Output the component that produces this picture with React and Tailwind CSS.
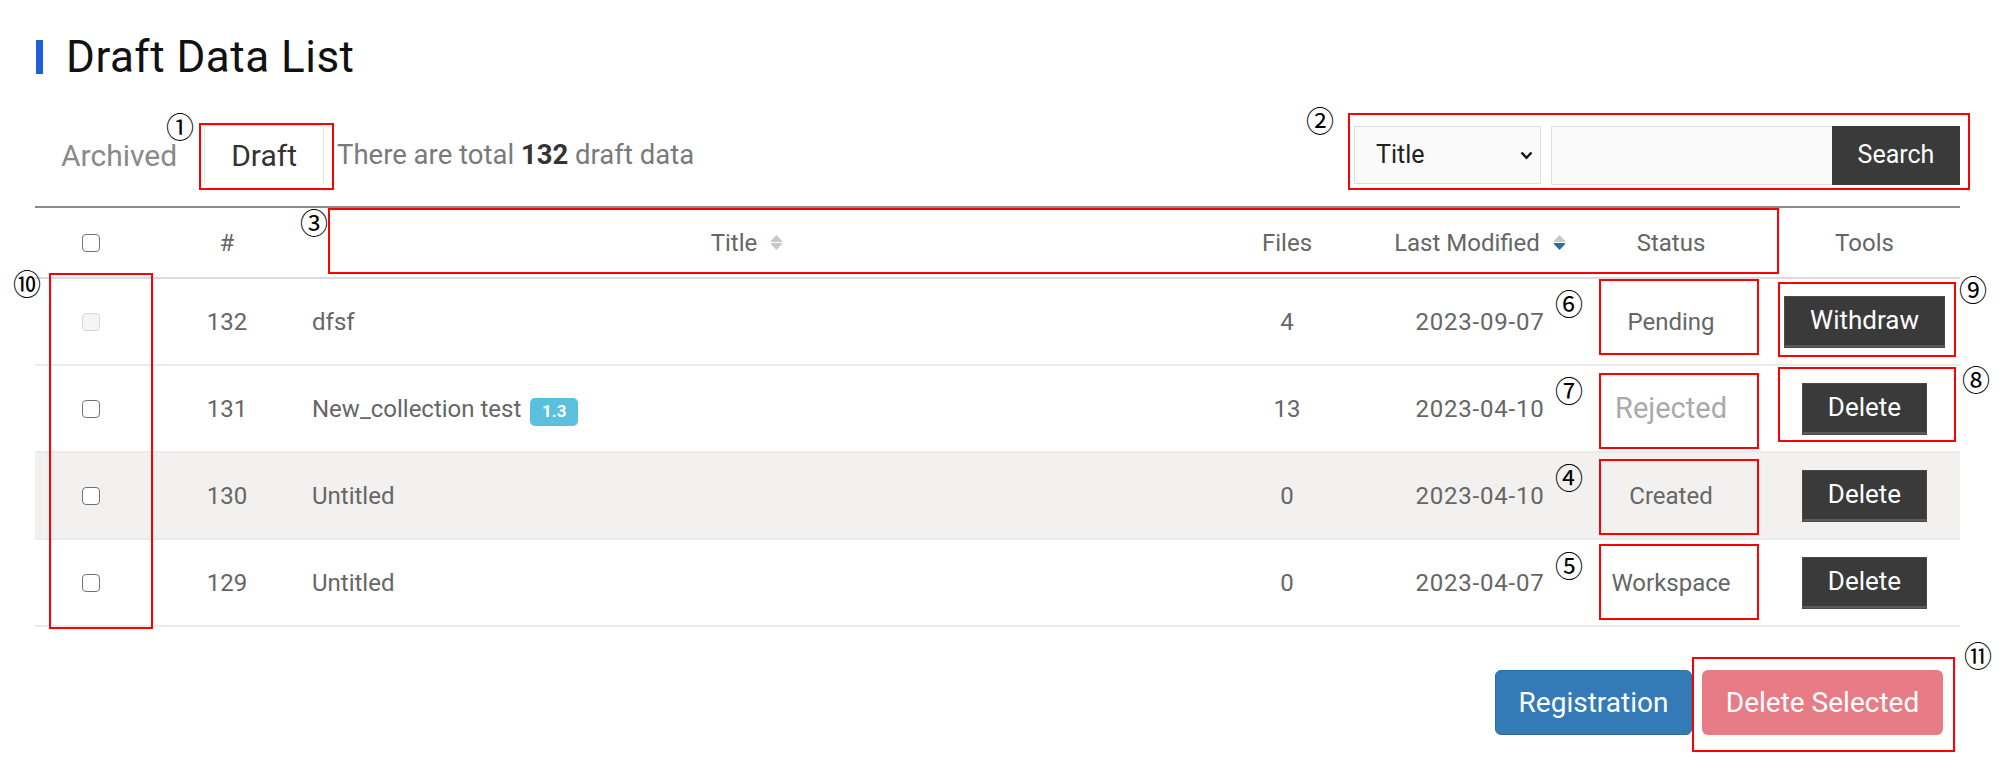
import React from "react";

const SortIcon = ({ active }) => (
  <svg width="13" height="15" viewBox="0 0 13 15">
    <path d="M1.5 6.2 L6.5 1 L11.5 6.2 Z" fill="#c8c8c8" stroke="#c8c8c8" strokeWidth="1.4" strokeLinejoin="round" />
    <path d="M1.5 8.8 L11.5 8.8 L6.5 14 Z" fill={active ? "#2c6aa8" : "#c8c8c8"} stroke={active ? "#2c6aa8" : "#c8c8c8"} strokeWidth="1.4" strokeLinejoin="round" />
  </svg>
);

const Box = ({ disabled }) =>
  disabled ? (
    <div className="w-[18px] h-[18px] rounded-[4px] border-[1.5px] border-[#d6d6d6] bg-[#f5f5f5]" />
  ) : (
    <div className="w-[18px] h-[18px] rounded-[4px] border-[1.5px] border-[#737373] bg-white" />
  );

const rows = [
  { n: 132, title: "dfsf", files: 4, date: "2023-09-07", status: "Pending", tool: "Withdraw", disabled: true },
  { n: 131, title: "New_collection test", badge: "1.3", files: 13, date: "2023-04-10", status: "Rejected", tool: "Delete" },
  { n: 130, title: "Untitled", files: 0, date: "2023-04-10", status: "Created", tool: "Delete", shade: true },
  { n: 129, title: "Untitled", files: 0, date: "2023-04-07", status: "Workspace", tool: "Delete" },
];

const Circ = ({ children, className }) => (
  <div className={"absolute w-[30px] h-[30px] flex items-center justify-center text-[28px] leading-none text-black font-['Noto_Sans_CJK_KR',sans-serif] " + className}>
    {children}
  </div>
);

export default function App() {
  return (
    <div className="relative w-[2006px] h-[780px] bg-white font-['Roboto',sans-serif] overflow-hidden">
      <div className="pl-[35px] w-[1960px]">
        {/* Title */}
        <div className="pt-[36px] h-[78px] flex items-center">
          <div className="w-[7px] h-[34px] bg-[#1d5fd8] ml-[1px]" />
          <div className="ml-[23px] text-[44px] leading-none text-[#111] tracking-[0.5px]">Draft Data List</div>
        </div>

        {/* Tabs + search */}
        <div className="mt-[47px] h-[60px] flex items-center justify-between">
          <div className="flex items-end h-[60px] ml-[1px]">
            <div className="h-[60px] px-[25px] flex items-center text-[30px] text-[#8a8a8a]">Archived</div>
            <div className="ml-[2px] h-[60px] px-[26px] flex items-center text-[30px] text-[#333] border border-b-0 border-[#e3e3e3] rounded-t-[4px]">Draft</div>
            <div className="ml-[13px] h-[60px] flex items-center text-[27.5px] text-[#7a7a7a]">
              There are total&nbsp;<span className="font-bold text-[#333]">132</span>&nbsp;draft data
            </div>
          </div>
          <div className="flex items-center">
            <div className="w-[187px] h-[58px] bg-[#fafafa] border border-[#dedede] flex items-center justify-between pl-[21px] pr-[7px]">
              <span className="text-[25px] text-[#222]">Title</span>
              <svg width="13" height="9" viewBox="0 0 13 9">
                <polyline points="1.5,1.5 6.5,6.8 11.5,1.5" fill="none" stroke="#111" strokeWidth="2.4" />
              </svg>
            </div>
            <div className="ml-[10px] w-[281px] h-[59px] bg-[#fafafa] border border-[#dedede] border-r-0" />
            <div className="w-[128px] h-[59px] bg-[#3a3a3a] flex items-center justify-center text-[25px] text-white">Search</div>
          </div>
        </div>

        {/* Table */}
        <div className="mt-[21px] w-[1925px] border-t-2 border-[#8c8c8c]">
          <div className="grid grid-cols-[112px_160px_880px_200px_186px_196px_191px] h-[71px] border-b-2 border-[#dcdcdc] items-center text-[24px] text-[#666]">
            <div className="flex justify-center"><Box /></div>
            <div className="text-center">#</div>
            <div className="flex items-center justify-center gap-[13px]">Title <SortIcon /></div>
            <div className="text-center">Files</div>
            <div className="flex items-center justify-center gap-[13px]">Last Modified <SortIcon active /></div>
            <div className="text-center">Status</div>
            <div className="text-center">Tools</div>
          </div>
          {rows.map((r) => (
            <div
              key={r.n}
              className={
                "grid grid-cols-[112px_160px_880px_200px_186px_196px_191px] h-[87px] border-b-2 border-[#ebebeb] items-center text-[24px] text-[#666] " +
                (r.shade ? "bg-[#f2f1f0]" : "bg-white")
              }
            >
              <div className="flex justify-center"><Box disabled={r.disabled} /></div>
              <div className="text-center">{r.n}</div>
              <div className="pl-[5px] flex items-center">
                <span>{r.title}</span>
                {r.badge && (
                  <span className="ml-[9px] mt-[6px] w-[48px] h-[28px] rounded-[5px] bg-[#5bc0de] text-white text-[17px] font-bold flex items-center justify-center">
                    {r.badge}
                  </span>
                )}
              </div>
              <div className="text-center">{r.files}</div>
              <div className="text-center tracking-[0.8px]">{r.date}</div>
              <div className={r.status === "Rejected" ? "text-center text-[29px] text-[#aaa]" : "text-center"}>{r.status}</div>
              <div className="flex justify-center">
                <div className="h-[50px] px-[25px] bg-[#3a3a3a] border-b-2 border-[#5a5a5a] shadow-[0_0_0_1px_#4a4a4a] flex items-center text-[26px] text-white">
                  {r.tool}
                </div>
              </div>
            </div>
          ))}
        </div>

        {/* Bottom buttons */}
        <div className="mt-[43px] w-[1925px] flex justify-end pr-[17px] gap-[10px]">
          <div className="w-[197px] h-[65px] rounded-[6px] bg-[#337ab7] border border-[#2e6da4] flex items-center justify-center text-[28px] text-white">
            Registration
          </div>
          <div className="w-[241px] h-[65px] rounded-[6px] bg-[#e87c86] flex items-center justify-center text-[28px] text-white">
            Delete Selected
          </div>
        </div>
      </div>

      {/* Annotation overlays */}
      <div className="absolute left-[199px] top-[123px] w-[135px] h-[67px] border-2 border-[#ff0000]" />
      <div className="absolute left-[1348px] top-[113px] w-[622px] h-[77px] border-2 border-[#ff0000]" />
      <div className="absolute left-[328px] top-[208px] w-[1451px] h-[66px] border-2 border-[#ff0000]" />
      <div className="absolute left-[1599px] top-[279px] w-[160px] h-[76px] border-2 border-[#ff0000]" />
      <div className="absolute left-[1599px] top-[373px] w-[160px] h-[76px] border-2 border-[#ff0000]" />
      <div className="absolute left-[1599px] top-[459px] w-[160px] h-[76px] border-2 border-[#ff0000]" />
      <div className="absolute left-[1599px] top-[544px] w-[160px] h-[76px] border-2 border-[#ff0000]" />
      <div className="absolute left-[1778px] top-[282px] w-[178px] h-[75px] border-2 border-[#ff0000]" />
      <div className="absolute left-[1778px] top-[367px] w-[178px] h-[75px] border-2 border-[#ff0000]" />
      <div className="absolute left-[49px] top-[273px] w-[104px] h-[356px] border-2 border-[#ff0000]" />
      <div className="absolute left-[1692px] top-[657px] w-[263px] h-[95px] border-2 border-[#ff0000]" />

      <Circ className="left-[165px] top-[111px]">①</Circ>
      <Circ className="left-[1305px] top-[105px]">②</Circ>
      <Circ className="left-[299px] top-[207px]">③</Circ>
      <Circ className="left-[1554px] top-[462px]">④</Circ>
      <Circ className="left-[1554px] top-[550px]">⑤</Circ>
      <Circ className="left-[1554px] top-[288px]">⑥</Circ>
      <Circ className="left-[1554px] top-[375px]">⑦</Circ>
      <Circ className="left-[1961px] top-[364px]">⑧</Circ>
      <Circ className="left-[1958px] top-[274px]">⑨</Circ>
      <Circ className="left-[12px] top-[268px]">⑩</Circ>
      <Circ className="left-[1963px] top-[640px]">⑪</Circ>
    </div>
  );
}
